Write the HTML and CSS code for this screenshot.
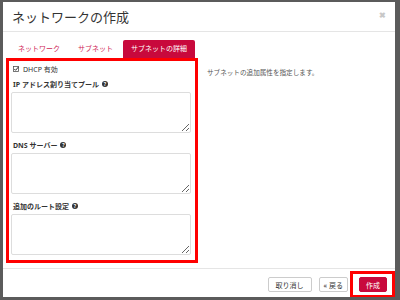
FILE: index.html
```html
<!DOCTYPE html>
<html lang="ja">

<head>
    <meta charset="utf-8">
    <link rel="stylesheet" href="styles.css">
</head>

<body>
    <div class="modal">
        <div class="modal-header">
            <h3>ネットワークの作成</h3>
            <span class="close">&#10006;</span>
        </div>

        <div class="modal-body">
            <ul class="tabs">
                <li>ネットワーク</li>
                <li>サブネット</li>
                <li class="active">サブネットの詳細</li>
            </ul>

            <div class="content">
                <div class="form-box">
                    <div class="check">
                        <svg width="6" height="6" viewBox="0 0 6 6">
                            <rect x="0.5" y="0.5" width="5" height="5" fill="none" stroke="#555" stroke-width="0.8"/>
                            <path d="M1.3 3 L2.6 4.3 L5.6 0.8" fill="none" stroke="#333" stroke-width="1"/>
                        </svg>
                        DHCP 有効
                    </div>

                    <label>IP アドレス割り当てプール <span class="help">?</span></label>
                    <textarea></textarea>

                    <label>DNS サーバー <span class="help">?</span></label>
                    <textarea></textarea>

                    <label>追加のルート設定 <span class="help">?</span></label>
                    <textarea></textarea>
                </div>
                <p class="desc">サブネットの追加属性を指定します。</p>
            </div>
        </div>

        <div class="modal-footer">
            <button class="btn">取り消し</button>
            <button class="btn back">&laquo; 戻る</button>
            <div class="mark">
                <button class="btn primary">作成</button>
            </div>
        </div>
    </div>
</body>

</html>
```

FILE: styles.css
```css
body{
    margin: 0;
    background-color: #5b5b5b;
    font-family: "Noto Sans", "Noto Sans CJK JP", sans-serif;
    color: #333;
}

.modal{
    margin: 2px 5px 0 3px;
    width: 392px;
    height: 295px;
    background-color: white;
    display: flex;
    flex-direction: column;
}

.modal-header{
    height: 30px;
    border-bottom: 1px solid #e5e5e5;
    display: flex;
    align-items: center;
    justify-content: space-between;
    padding: 0 9px;
    box-sizing: border-box;
}

.modal-header h3{
    margin: 0;
    font-size: 13px;
    font-weight: normal;
    color: #333;
}

.close{
    font-size: 8px;
    font-weight: bold;
    color: #c8c8c8;
    align-self: flex-start;
    margin-top: 7px;
}

.modal-body{
    flex: 1;
    padding: 8px 3px 0 3px;
}

.tabs{
    list-style: none;
    margin: 0;
    padding: 0 0 0 4px;
    display: flex;
    gap: 2px;
    height: 18px;
}

.tabs li{
    padding: 0 8px;
    font-size: 7px;
    line-height: 18px;
    color: #cf2657;
}

.tabs li.active{
    background-color: #c8093c;
    color: white;
    border-radius: 2px 2px 0 0;
}

.content{
    display: flex;
    gap: 9px;
}

.form-box{
    width: 182px;
    height: 199px;
    border: 3px solid #ff0000;
    padding: 0 2px;
    display: flex;
    flex-direction: column;
}

.check{
    font-size: 7px;
    margin-top: 3px;
    height: 10px;
    display: flex;
    align-items: center;
    gap: 4px;
    padding-left: 2px;
}

label{
    font-size: 7px;
    font-weight: bold;
    margin-top: 5px;
    height: 10px;
    display: flex;
    align-items: center;
    gap: 3px;
    padding-left: 2px;
}

label + textarea ~ label{
    margin-top: 7px;
}

.help{
    display: inline-block;
    width: 6px;
    height: 6px;
    border-radius: 50%;
    background-color: #333;
    color: white;
    font-size: 5px;
    line-height: 6px;
    text-align: center;
}

textarea{
    margin: 3px 0 0 0;
    height: 41px;
    border: 1px solid #ddd;
    border-radius: 2px;
    box-sizing: border-box;
    width: 180px;
    resize: vertical;
}

.desc{
    margin: 9px 0 0 0;
    font-size: 6.6px;
    color: #555;
}

.modal-footer{
    height: 28px;
    border-top: 1px solid #e5e5e5;
    display: flex;
    justify-content: flex-end;
    align-items: flex-start;
    gap: 7px;
}

.btn{
    font-family: "Noto Sans", "Noto Sans CJK JP", sans-serif;
    font-size: 7px;
    height: 15px;
    padding: 0 7px;
    margin-top: 8px;
    background-color: white;
    border: 1px solid #ccc;
    border-radius: 2px;
    color: #333;
}

.btn.back{
    padding: 0 4px;
}

.mark{
    display: flex;
    border: 3px solid #ff0000;
    padding: 3px 5px 3px 6px;
    margin: 2px 0 0 -5px;
}

.btn.primary{
    margin-top: 0;
    background-color: #c8093c;
    border-color: #c8093c;
    color: white;
    padding: 0 6px;
}
```
